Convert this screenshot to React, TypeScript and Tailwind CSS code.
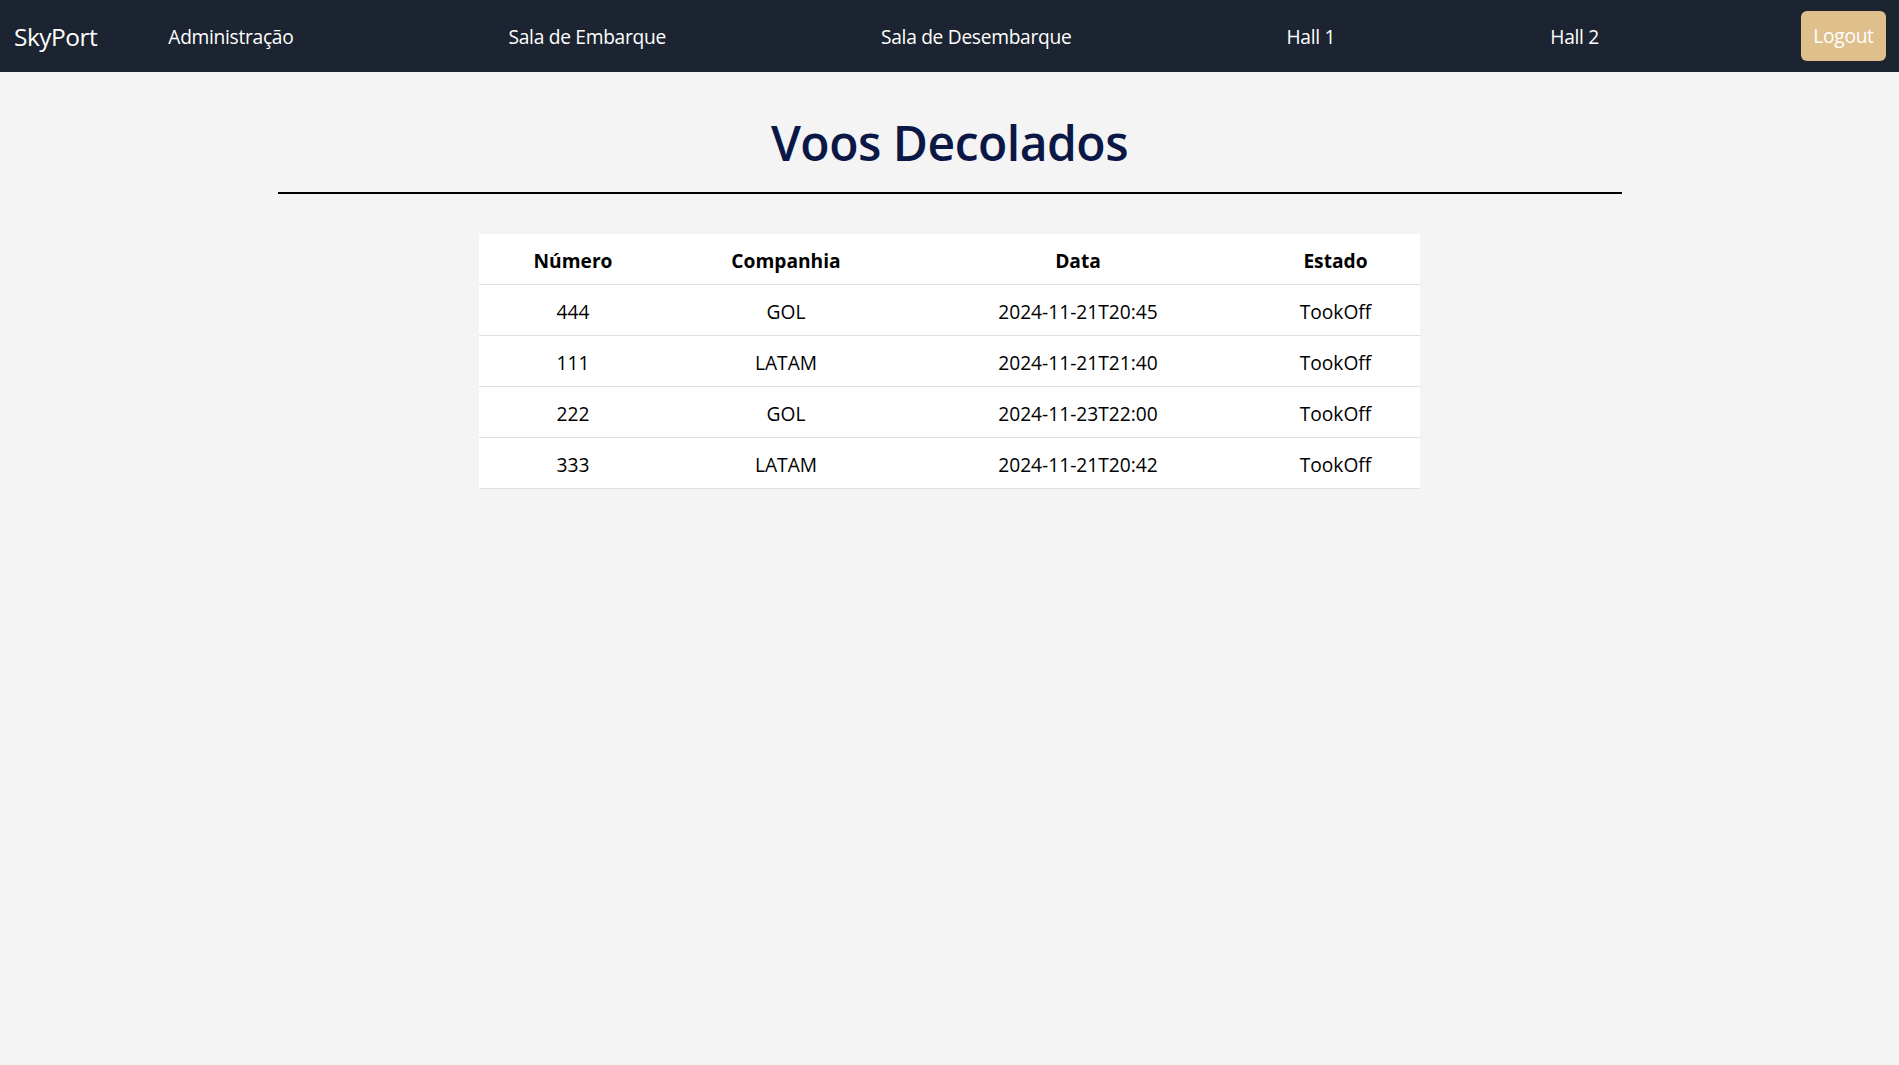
import React from 'react';

const flights = [
  { numero: '444', companhia: 'GOL', data: '2024-11-21T20:45', estado: 'TookOff' },
  { numero: '111', companhia: 'LATAM', data: '2024-11-21T21:40', estado: 'TookOff' },
  { numero: '222', companhia: 'GOL', data: '2024-11-23T22:00', estado: 'TookOff' },
  { numero: '333', companhia: 'LATAM', data: '2024-11-21T20:42', estado: 'TookOff' },
];

const links = ['Administração', 'Sala de Embarque', 'Sala de Desembarque', 'Hall 1', 'Hall 2'];

export default function App() {
  return (
    <div className="min-h-screen bg-[#f4f4f4] font-['Open_Sans',sans-serif]">
      <nav className="h-[72px] bg-[#1b2430] flex items-center pl-[14px] pr-[13px]">
        <span className="text-white text-[24.5px] tracking-[-0.5px] pt-[2px]">SkyPort</span>
        <ul className="flex-1 flex justify-between ml-[71px] mr-[202px] pt-[2px] text-white text-[19.2px] tracking-[-0.3px]">
          {links.map((l) => (
            <li key={l}>
              <a href="#" className="hover:underline">{l}</a>
            </li>
          ))}
        </ul>
        <button className="h-[50px] w-[85px] rounded-md bg-[#dfbf8c] text-white text-[19.2px] tracking-[-0.3px]">
          Logout
        </button>
      </nav>

      <main className="flex flex-col items-center">
        <h1 className="mt-[41px] text-[48px] leading-[60px] font-semibold text-[#0b1745] tracking-[-0.5px]">
          Voos Decolados
        </h1>
        <hr className="mt-[19px] w-[1344px] border-t-2 border-black" />

        <table className="mt-[40px] w-[941px] bg-white text-black text-[19.2px] border-collapse">
          <thead>
            <tr className="h-[50px] border-b border-[#dfdfe6]">
              <th className="w-[188px] pt-[5px] font-bold">Número</th>
              <th className="w-[238px] pt-[5px] font-bold">Companhia</th>
              <th className="w-[346px] pt-[5px] font-bold">Data</th>
              <th className="w-[169px] pt-[5px] font-bold">Estado</th>
            </tr>
          </thead>
          <tbody>
            {flights.map((f) => (
              <tr key={f.numero} className="h-[51px] border-b border-[#dfdfe6] text-center">
                <td className="pt-[5px]">{f.numero}</td>
                <td className="pt-[5px]">{f.companhia}</td>
                <td className="pt-[5px]">{f.data}</td>
                <td className="pt-[5px]">{f.estado}</td>
              </tr>
            ))}
          </tbody>
        </table>
      </main>
    </div>
  );
}
